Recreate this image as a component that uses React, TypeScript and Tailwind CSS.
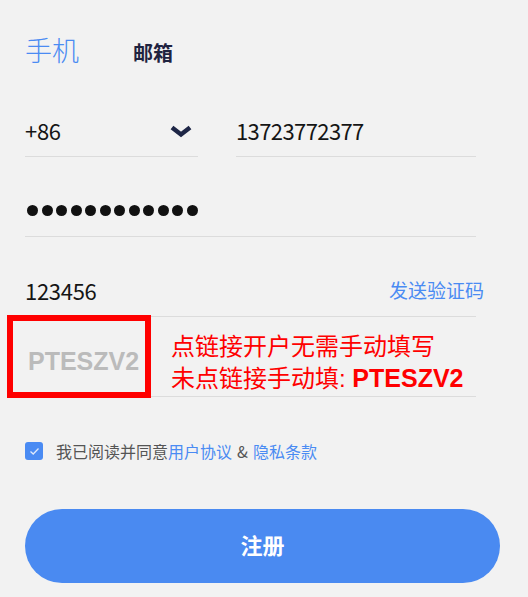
import React from "react";

const cjk = { fontFamily: '"Noto Sans CJK SC", "Noto Sans", sans-serif' };
const arial = { fontFamily: '"Liberation Sans", Arial, "Noto Sans CJK SC", sans-serif' };

export default function App() {
  return (
    <div className="w-[528px] h-[597px] bg-[#f2f2f2] overflow-hidden pl-[25px] pt-[32px]" style={cjk}>
      {/* tabs */}
      <div className="flex items-baseline h-[36px]">
        <span className="text-[27px] leading-[36px] text-[#4a8bf3] font-light">手机</span>
        <span className="ml-[54px] text-[20px] font-bold text-[#1f2340]">邮箱</span>
      </div>

      <div className="w-[451px] mt-[9px]">
        {/* row 1 */}
        <div className="flex h-[80px] gap-[38px]">
          <div className="w-[173px] h-full border-b border-[#dcdcdc] flex items-center justify-between pt-[28px]">
            <span className="text-[22px] tracking-[-0.3px] text-[#151515]">+86</span>
            <svg width="22" height="13" viewBox="0 0 22 13" className="mr-[6px] mt-[1px]">
              <path d="M2 2.5 L11 9.5 L20 2.5" fill="none" stroke="#1e2646" strokeWidth="4.5" />
            </svg>
          </div>
          <div className="flex-1 h-full border-b border-[#dcdcdc] flex items-center pt-[28px]">
            <span className="text-[22px] tracking-[-0.6px] text-[#151515]">13723772377</span>
          </div>
        </div>

        {/* row 2 */}
        <div className="h-[80px] border-b border-[#dcdcdc] flex items-center pt-[28px]">
          <div className="flex gap-[3.5px] ml-[2px]">
            {Array.from({ length: 12 }).map((_, i) => (
              <span key={i} className="block w-[11px] h-[11px] rounded-full bg-[#111]" />
            ))}
          </div>
        </div>

        {/* row 3 */}
        <div className="h-[80px] border-b border-[#dcdcdc] flex items-center justify-between pt-[28px]">
          <span className="text-[22px] tracking-[-0.3px] text-[#151515]">123456</span>
          <span className="text-[19px] text-[#4a8bf3] -mr-[8px]">发送验证码</span>
        </div>

        {/* row 4 */}
        <div className="relative h-[80px] border-b border-[#dcdcdc] flex items-center pt-[10px]">
          <div className="w-[146px] pl-[3px]">
            <span className="text-[25px] font-bold text-[#bbbbbb]" style={arial}>PTESZV2</span>
          </div>
          <div className="text-[24px] leading-[32px] text-[#ff0000]">
            <div>点链接开户无需手动填写</div>
            <div>
              未点链接手动填<span style={arial}>: </span>
              <span className="text-[25px] font-bold" style={arial}>PTESZV2</span>
            </div>
          </div>
          <div className="absolute left-[-18px] top-[-2px] w-[144px] h-[83px] border-[6px] border-[#ff0000]" />
        </div>
      </div>

      {/* agreement */}
      <div className="flex items-center h-[24px] mt-[42px]">
        <span className="w-[18px] h-[18px] rounded-[3px] bg-[#4a8bf3] flex items-center justify-center">
          <svg width="11" height="9" viewBox="0 0 11 9">
            <path d="M1.5 4.5 L4.2 7 L9.5 1.5" fill="none" stroke="#dfe9fb" strokeWidth="1.3" />
          </svg>
        </span>
        <span className="ml-[13px] text-[16px] text-[#555]">
          我已阅读并同意<span className="text-[#4a8bf3]">用户协议</span>
          <span className="mx-[5px]">&amp;</span>
          <span className="text-[#4a8bf3]">隐私条款</span>
        </span>
      </div>

      {/* button */}
      <button className="mt-[46px] w-[475px] h-[74px] rounded-full bg-[#4a8af1] flex items-center justify-center">
        <span className="text-[22px] font-bold text-white -mt-[3px]">注册</span>
      </button>
    </div>
  );
}
